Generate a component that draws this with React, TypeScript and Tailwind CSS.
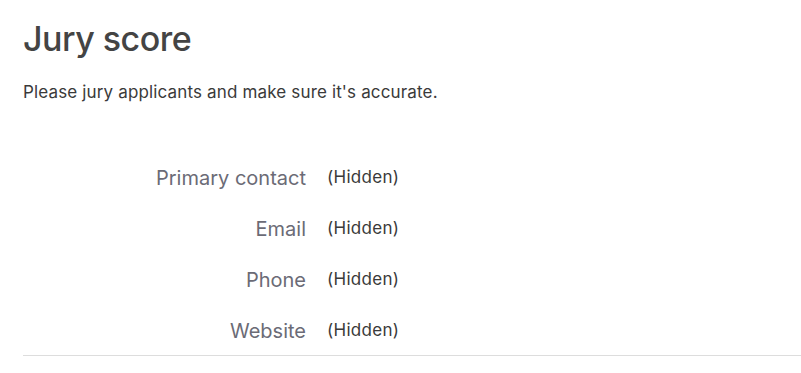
import React from "react";

const rows = [
  { label: "Primary contact", value: "(Hidden)" },
  { label: "Email", value: "(Hidden)" },
  { label: "Phone", value: "(Hidden)" },
  { label: "Website", value: "(Hidden)" },
];

const App: React.FC = () => {
  return (
    <div className="min-h-screen bg-white pl-[23px] pt-[17px] font-['Inter',sans-serif]">
      {/* Header */}
      <h1 className="text-[34px] leading-[44px] font-medium text-[#444444] tracking-[-0.5px]">
        Jury score
      </h1>
      <p className="mt-[21px] text-[17px] leading-[20px] text-[#3a3a3a] tracking-[0.15px]">
        Please jury applicants and make sure it's accurate.
      </p>

      {/* Details */}
      <div className="mt-[61px] flex flex-col gap-[21px] border-b border-[#dddddd] pb-[9px]">
        {rows.map((row) => (
          <div key={row.label} className="flex items-start">
            <div className="w-[283px] text-right text-[20px] leading-[30px] text-[#6b6b76]">
              {row.label}
            </div>
            <div className="ml-[21px] text-[17px] leading-[28px] tracking-[0.3px] text-[#3a3a3a]">
              {row.value}
            </div>
          </div>
        ))}
      </div>
    </div>
  );
};

export default App;
